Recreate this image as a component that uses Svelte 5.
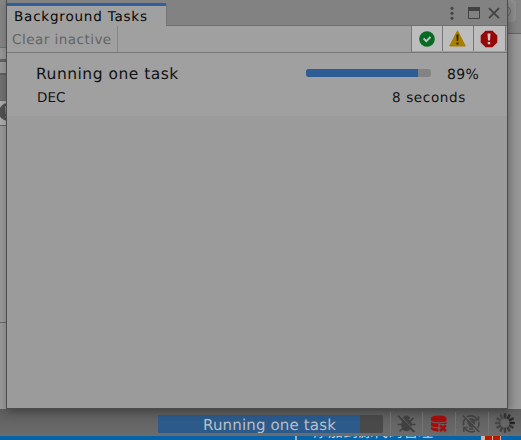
<script>
  const progress = 89;
  const spokes = Array.from({ length: 12 }, (_, i) => i);
</script>

<div class="screen">
  <main class="backdrop">
    <div class="side left">
      <div class="l1"></div><div class="l2"></div><div class="l3"></div><div class="l4"></div>
      <div class="l5"><svg width="7" height="20" viewBox="0 0 7 20"><circle cx="8" cy="10" r="9" fill="#505050" /><path d="M5 4h3v8H5.500zM5.500 14h3v2h-3z" fill="#8c8c8c" /></svg></div><div class="l6"></div>
    </div>
    <div class="side right"><div class="search"><i></i></div></div>
  </main>
  <footer class="status">
    <div class="task"><div class="done" style="width:{progress + 0.8}%"></div><span class="task-label">Running one task</span></div>
    <div class="cell c1">
      <svg width="20" height="20" viewBox="0 0 20 20" fill="none" stroke="#414141" stroke-width="1.7">
        <ellipse cx="10.500" cy="11" rx="5.300" ry="6.300" fill="#414141" stroke="none" /><path d="M7 5a3.500 3.500 0 0 1 7 0z" fill="#414141" stroke="none" />
        <path d="M1.500 10.500h18M4 4l4 4M17.500 4l-4 4M3.500 17.500l4-4M17.500 17.500l-4-4" /><path d="M3.200 1l16.400 16.400" stroke="#656565" stroke-width="1" /><path d="M2 1.700l16.500 16.500" />
      </svg>
    </div>
    <div class="cell c2">
      <svg width="18" height="18" viewBox="0 0 18 18">
        <path d="M0 3C0-.5 15.500-.5 15.500 3V13.500c0 4-15.500 4-15.500 0z" fill="#a50c0c" />
        <path d="M0 6c2 2.500 14 2.500 16 0M0 11c2 2.500 14 2.500 16 0" fill="none" stroke="#656565" stroke-width="1.200" />
        <path d="M7.500 9h10V18h-10z" fill="#666" /><path d="M9 10.200l5.800 5.800M14.800 10.200L9 16" stroke="#a50c0c" stroke-width="2.600" />
      </svg>
    </div>
    <div class="cell c3">
      <svg width="20" height="20" viewBox="0 0 20 20" fill="none" stroke="#444" stroke-width="1.700">
        <path d="M6 2.700a8 8 0 0 1 10.500 3M17.900 8a8 8 0 0 1-1.200 6M2.500 11.500a8 8 0 0 1 1.200-6.500M3.700 14A8 8 0 0 0 14 17" />
        <path d="M13 6h4.400V2M7 13.500H2.800v4.200" /><path d="M6.300 8a4 4 0 1 1 6.200 3.500l-.5 2H8.400l-.5-2A4 4 0 0 1 6.300 8z" fill="#444" stroke="none" /><path d="M8.200 15h4" />
        <path d="M3 .8l16.400 16.400" stroke="#656565" stroke-width="1" /><path d="M1.800 1.500l16.500 16.500" />
      </svg>
    </div>
    <div class="cell c4">
      <svg width="20" height="20" viewBox="-10 -10 20 20">
        {#each spokes as i}
          <rect x="-1.3" y="-9.8" width="2.6" height="5.2" rx=".5" fill="#222" opacity={i < 4 ? 0.7 + i * 0.1 : 0.7 - (i - 4) * 0.05} transform="rotate({i * 30})" />
        {/each}
      </svg>
    </div>
  </footer>
  <div class="taskbar"><span class="tick"></span><span class="cjk">添加到源代码管理</span><span class="flag"><i></i><i></i></span></div>

  <section class="window">
    <header>
      <div class="tab"><span class="title">Background Tasks</span></div>
      <div class="controls">
        <svg width="58" height="16" viewBox="0 0 58 16">
          <g fill="#424242"><circle cx="5" cy="3.300" r="1.500" /><circle cx="5" cy="8.300" r="1.500" /><circle cx="5" cy="13.300" r="1.500" /></g>
          <path d="M21.500 2.500h11v11h-11z" fill="none" stroke="#424242" /><path d="M21 2h12v4H21z" fill="#424242" />
          <path d="M42 3.200l10 10M52 3.200l-10 10" stroke="#424242" stroke-width="1.700" />
        </svg>
      </div>
    </header>
    <div class="toolbar">
      <div class="clear"><span>Clear inactive</span></div>
      <div class="filters">
        <div><svg width="16" height="16" viewBox="0 0 16 16"><circle cx="8" cy="8" r="7.800" fill="#056b23" /><path d="M4.600 7.500l2.700 2.700 4.200-4.200" fill="none" stroke="#c4c4c4" stroke-width="1.800" /></svg></div>
        <div><svg class="warn" width="17" height="17" viewBox="0 0 17 17"><path d="M8.500.8L16.300 16H.7z" fill="#a87f05" stroke="#a87f05" stroke-linejoin="round" /><path d="M7.400 4.500h2.200l-.4 6.500H7.800zM7.500 12.400h2v2h-2z" fill="#2d2308" /></svg></div>
        <div><svg class="error" width="18" height="18" viewBox="0 0 18 18"><path d="M5.500.7h7l4.800 4.800v7l-4.800 4.800h-7L.7 12.500v-7z" fill="#980708" /><path d="M7.500 3.500h3l-.5 7H8zM7.800 12h2.400v2.200H7.800z" fill="#d0c4c4" /></svg></div>
      </div>
    </div>
    <article>
      <div class="row first"><span class="name">Running one task</span><div class="bar"><div style="width:{progress + 0.6}%"></div></div><span class="pct">{progress}%</span></div>
      <div class="row second"><span class="desc">DEC</span><span class="time">8 seconds</span></div>
    </article>
  </section>
</div>

<style>
  :global(body) { margin: 0; }
  .screen { position: relative; width: 521px; height: 440px; overflow: hidden; display: flex; flex-direction: column; font-family: "DejaVu Sans", Verdana, sans-serif; color: #121212; white-space: nowrap; text-rendering: geometricPrecision; }
  .screen * { box-sizing: border-box; }
  svg { display: block; }
  .backdrop { height: 409px; display: flex; justify-content: space-between; background: #989898; }
  .side { display: flex; flex-direction: column; }
  .left { width: 7px; }
  .l1 { height: 48px; background: #858585; border-bottom: 1px solid #6f6f6f; }
  .l2 { height: 14px; background: #979797; border-bottom: 3px solid #626262; }
  .l3 { height: 13px; background: #979797; border-bottom: 2px solid #606060; }
  .l4 { height: 25px; background: #707070; }
  .l5 { height: 26px; background: #aaa; border-bottom: 1px solid #666; border-top: 1px solid #686868; padding-top: 1px; }
  .l6 { height: 197px; border-bottom: 1px solid #676767; }
  .right { width: 14px; height: 34px; background: #858585; border-bottom: 1px solid #666; }
  .search { width: 9px; height: 22px; background: #929292; border-radius: 0 4px 4px 0; overflow: hidden; }
  .search i { display: block; width: 11px; height: 11px; margin: 6px 0 0 -7px; border: 1px solid #717171; border-radius: 50%; }
  .status { height: 27px; display: flex; background: linear-gradient(#5c5c5c, #6c6c6c); padding-left: 158px; }
  .task { width: 225px; height: 18px; margin-top: 6px; background: #494949; border-radius: 2px; display: grid; overflow: hidden; }
  .task > * { grid-area: 1 / 1; }
  .done { height: 18px; background: #2b5a8b; }
  .task-label { font-size: 15px; line-height: 20px; letter-spacing: .16px; color: #b9bfc5; padding-left: 45px; }
  .cell { display: flex; align-items: center; border-left: 1px solid #737373; height: 23px; margin-top: 3px; padding-left: 5px; }
  .c1 { margin-left: 7px; width: 32px; }
  .c2 { width: 33px; padding-left: 8px; }
  .c3 { width: 33px; }
  .c4 { width: 33px; padding-left: 6px; }
  .c4 svg { margin-top: -2px; }
  .taskbar { height: 4px; background: #0564a7; display: flex; overflow: hidden; padding-left: 295px; }
  .tick { width: 2px; height: 4px; background: #aaa; }
  .cjk { font: 15px/16px "Noto Sans CJK SC", sans-serif; color: #c4d0d9; margin: -12px 0 0 16px; width: 168px; height: 16px; }
  .flag { display: flex; gap: 1px; width: 20px; height: 4px; background: #cfb596; padding-left: 4px; }
  .flag i { width: 7px; background: #b11b08; }
  .window { position: absolute; left: 6px; top: 0; width: 502px; height: 409px; border: 1px solid #4c4c4c; border-top: 0; background: #9b9b9b; box-shadow: 2px 2px 9px #0005; }
  header { height: 26px; display: flex; justify-content: space-between; background: #828282; border-bottom: 1px solid #707070; padding-top: 3px; }
  .tab { width: 160px; height: 23px; background: #a0a0a0; border-top: 3px solid #2f5f9f; border-radius: 0 3px 0 0; border-right: 1px solid #777; padding-left: 7px; display: flex; }
  .title { font-size: 13.5px; line-height: 23px; height: 20px; letter-spacing: .8px; color: #080808; }
  .controls { width: 60px; padding-top: 2px; }
  .toolbar { height: 27px; display: flex; justify-content: space-between; background: #a0a0a0; border-bottom: 1px solid #777; padding-right: 1px; }
  .clear { width: 111px; height: 26px; border-right: 1px solid #858585; font-size: 13.5px; line-height: 29px; letter-spacing: .48px; color: #646464; padding-left: 5px; }
  .filters { display: flex; border-left: 1px solid #777; }
  .filters div { width: 31px; height: 25px; border-right: 1px solid #777; background: #bdbdbd; display: flex; align-items: center; justify-content: center; }
  .filters div:last-child { width: 32px; }
  .warn, .error { margin-right: 1px; }
  article { height: 63px; background: #a0a0a0; }
  .row { display: flex; }
  .first { height: 34px; padding: 10px 0 0 29px; }
  .name { width: 270px; font-size: 15.5px; line-height: 22px; letter-spacing: .5px; }
  .bar { width: 125px; height: 8px; margin-top: 6px; border-radius: 3px; background: #838383; overflow: hidden; }
  .bar div { height: 8px; background: #2d5d94; }
  .pct { font-size: 14px; line-height: 24px; margin-left: 16px; letter-spacing: .35px; }
  .second { padding-left: 30px; font-size: 13.5px; line-height: 23px; }
  .desc { width: 355px; }
  .time { letter-spacing: .65px; }
</style>
